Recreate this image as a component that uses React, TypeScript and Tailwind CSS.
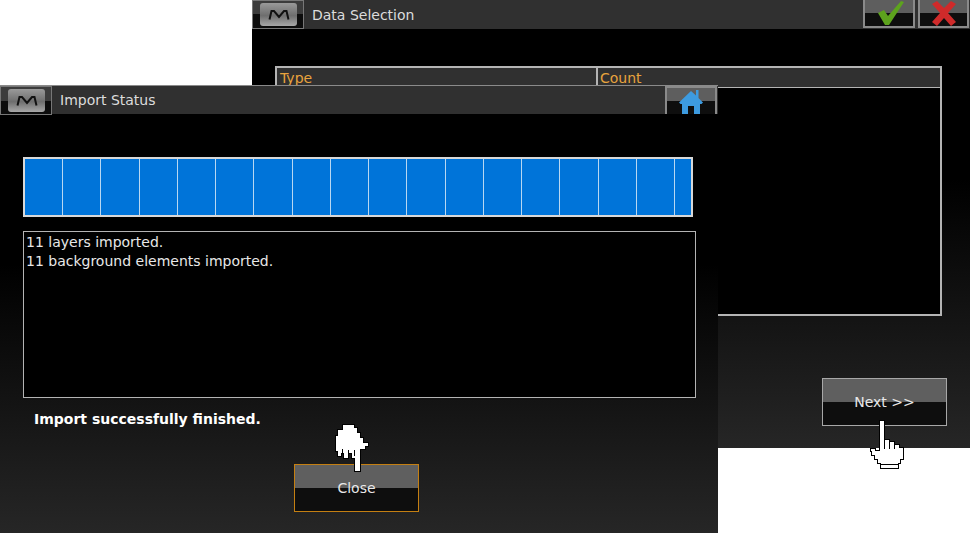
const FONT = "font-['DejaVu_Sans',sans-serif]";

function MButton() {
  return (
    <div className="relative w-[52px] h-[29px] border border-[#777] bg-[linear-gradient(to_bottom,#3c3c3c_0%,#3c3c3c_50%,#0c0c0c_50%,#0c0c0c_100%)]">
      <div className="absolute left-[7px] top-[2px] w-[37px] h-[23px] rounded-[3px] bg-[linear-gradient(to_bottom,#9a9a9a,#6e6e6e_55%,#a8a8a8)] flex items-center justify-center">
        <svg width="22" height="10" viewBox="0 0 22 10">
          <path d="M1.5 9.5 L3.5 1 L6 1 L11 7 L16 1 L18.5 1 L20.5 9.5" fill="none" stroke="#111" strokeWidth="2" />
        </svg>
      </div>
    </div>
  );
}

function GlossBtn({ w, children }: { w: string; children?: React.ReactNode }) {
  return <div className={`${w} h-[28px] border-x-2 border-b-2 border-[#8a8a8a] bg-[linear-gradient(to_bottom,#5e5e5e_0%,#5e5e5e_50%,#0e0e0e_50%,#0e0e0e_100%)] flex items-center justify-center`}>{children}</div>;
}

function BigBtn({ label, border }: { label: string; border: string }) {
  return (
    <div className={`w-[125px] h-[48px] border ${border} bg-[linear-gradient(to_bottom,#5f5f5f_0%,#5f5f5f_50%,#0e0e0e_50%,#0e0e0e_100%)] flex items-center justify-center text-[14px] text-[#e8e8e8]`}>
      {label}
    </div>
  );
}

function HandDown() {
  return (
    <svg className="absolute left-[334px] top-[423px]" width="36" height="50" viewBox="0 0 36 50" shapeRendering="crispEdges">
      <path d="M8 1 H20 V4 H23 V9 H26 V14 H29 V19 H34 V23 H31 V26 H26 V48 H20 V35 H17 V30 H14 V35 H9 V30 H7 V33 H3 V28 H1 V12 H3 V6 H8 Z" fill="#fff" stroke="#000" strokeWidth="1" />
      <path d="M8 26 V30 M14 27 V30 M20 27 V33" stroke="#000" strokeWidth="1" />
    </svg>
  );
}

function HandUp() {
  return (
    <svg className="absolute left-[869px] top-[419px]" width="38" height="50" viewBox="0 0 38 50" shapeRendering="crispEdges">
      <path d="M10 1 H15 V20 H20 V22 H25 V25 H30 V28 H34 V40 H31 V44 H29 V49 H11 V44 H8 V40 H5 V36 H2 V32 H1 V29 H6 V31 H10 Z" fill="#fff" stroke="#000" strokeWidth="1" />
      <path d="M15.5 21 V30 M20.5 23 V30 M25.5 26 V30" stroke="#000" strokeWidth="1" />
      <path d="M11 45 H29" stroke="#000" strokeWidth="1" />
    </svg>
  );
}

export default function App() {
  const segs = Array.from({ length: 17 });
  return (
    <div className={`relative w-[970px] h-[533px] bg-white overflow-hidden ${FONT}`}>
      {/* Back window */}
      <div className="absolute left-[252px] top-0 w-[718px] h-[448px] flex flex-col bg-[linear-gradient(to_bottom,#000_40%,#262626_100%)]">
        <div className="h-[29px] shrink-0 bg-[#303030] flex items-start">
          <MButton />
          <span className="ml-2 mt-[6px] text-[14px] leading-[18px] text-[#dcdcdc]">Data Selection</span>
          <div className="ml-auto mr-[1px] flex gap-[3px]">
            <GlossBtn w="w-[52px]">
              <svg width="38" height="26" viewBox="0 0 38 26">
                <path d="M8 13 L14 10 L18 16 L31 1 L34 2 L19 25 L15 25 Z" fill="#5da31d" />
              </svg>
            </GlossBtn>
            <GlossBtn w="w-[51px]">
              <svg width="30" height="26" viewBox="0 0 30 26">
                <path d="M3 4 L8 1 L15 8 L22 1 L27 4 L19 13 L27 22 L22 26 L15 18 L8 26 L3 22 L11 13 Z" fill="#cf2a2a" />
              </svg>
            </GlossBtn>
          </div>
        </div>
        <div className="flex-1 flex flex-col pl-[23px] pt-[37px] pr-[28px]">
          <div className="w-[667px] h-[250px] border-2 border-[#b4b4b4] bg-black">
            <div className="h-[20px] bg-[#303030] flex border-b border-[#b4b4b4] text-[14px] leading-[20px] text-[#e8a33d]">
              <div className="w-[321px] pl-[3px] border-r-2 border-[#b4b4b4]">Type</div>
              <div className="pl-[2px]">Count</div>
            </div>
          </div>
          <div className="ml-[547px] mt-[62px]">
            <BigBtn label="Next >>" border="border-[#a8a8a8]" />
          </div>
        </div>
      </div>

      {/* Front window */}
      <div className="absolute left-0 top-[85px] w-[718px] h-[448px] flex flex-col bg-[linear-gradient(to_bottom,#000_40%,#262626_100%)]">
        <div className="h-[29px] shrink-0 bg-[#303030] border-t border-[#8a8a8a] flex items-start">
          <MButton />
          <span className="ml-2 mt-[5px] text-[14px] leading-[18px] text-[#dcdcdc]">Import Status</span>
          <div className="ml-auto mr-[1px]">
            <div className="w-[52px] h-[28px] border-2 border-b-0 border-[#8a8a8a] bg-[linear-gradient(to_bottom,#5e5e5e_0%,#5e5e5e_50%,#0e0e0e_50%,#0e0e0e_100%)] flex items-center justify-center">
              <svg width="26" height="26" viewBox="0 0 26 26">
                <path d="M13 3 L18 7.5 V2 H20.5 V10 L25 14.5 L23.5 16 H22 V26 H16 V18 H10 V26 H4 V16 H2.5 L1 14.5 Z" fill="#3d9be0" />
              </svg>
            </div>
          </div>
        </div>
        <div className="flex-1 flex flex-col pt-[43px] pl-[23px]">
          <div className="w-[670px] h-[60px] border-2 border-[#d8d8d8] bg-[#0074d9] flex overflow-hidden">
            {segs.map((_, i) => (
              <div key={i} className={`${i === 0 ? "w-[38px]" : "w-[38.25px]"} shrink-0 h-full border-r border-[#b9d8f2]`} />
            ))}
          </div>
          <div className="mt-[14px] w-[673px] h-[167px] border border-[#b4b4b4] bg-black pl-[2px] pt-[1px] text-[14px] leading-[19px] text-[#e8e8e8]">
            <div>11 layers imported.</div>
            <div>11 background elements imported.</div>
          </div>
          <div className="ml-[11px] mt-[11px] text-[14px] leading-[20px] font-bold text-white">Import successfully finished.</div>
          <div className="ml-[271px] mt-[35px]">
            <BigBtn label="Close" border="border-[#c47f12]" />
          </div>
        </div>
      </div>

      <HandDown />
      <HandUp />
    </div>
  );
}
